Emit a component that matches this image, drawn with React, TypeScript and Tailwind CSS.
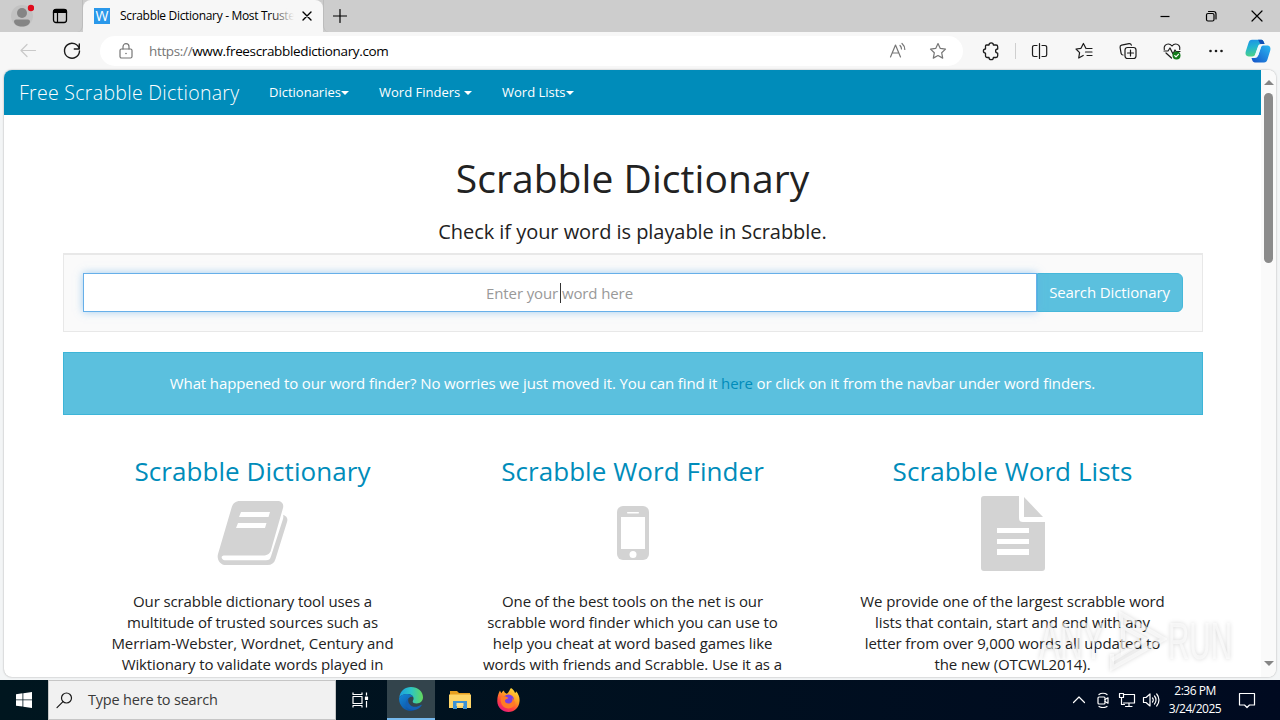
import type { ReactNode } from "react"

function Svg({ size, box, className = "", children }: { size: number; box?: string; className?: string; children: ReactNode }) {
  return (
    <svg
      width={size}
      height={size}
      viewBox={box ?? `0 0 ${size} ${size}`}
      fill="none"
      stroke="currentColor"
      strokeWidth="1.2"
      strokeLinecap="round"
      strokeLinejoin="round"
      className={`shrink-0 ${className}`}
    >
      {children}
    </svg>
  )
}

function TabStrip() {
  return (
    <div className="flex h-8 bg-[#cdcdcd]">
      <div className="flex w-[83px] items-center rounded-br-md border-r border-[#bcbcbc] pl-[10px]">
        <Svg size={24}>
          <circle cx="12" cy="12" r="11" fill="#c2c2c2" stroke="none" />
          <circle cx="12" cy="9" r="5" fill="#858585" stroke="none" />
          <path d="M4 17.500c0-1.500 1.500-2 3-2h10c1.500 0 3 .5 3 2 0 3-4 5-8 5s-8-2-8-5z" fill="#858585" stroke="none" />
          <circle cx="21" cy="4" r="3.200" fill="#e00b1c" stroke="none" />
        </Svg>
        <Svg size={16} className="ml-[18px] text-black">
          <rect x="1.500" y="1.500" width="13" height="13" rx="2.500" strokeWidth="1.300" />
          <path d="M1.500 3.500a2 2 0 0 1 2-2h9a2 2 0 0 1 2 2v1h-13z" fill="currentColor" />
          <path d="M5.500 5v9" />
        </Svg>
      </div>
      <div className="flex w-[240px] items-center rounded-t-lg bg-[#f7f7f7] pl-[11px]">
        <div className="flex h-4 w-4 items-center justify-center bg-[#2a98ea] font-['Open_Sans',sans-serif] text-[14px] leading-none text-white">
          W
        </div>
        <div className="relative ml-[10px] w-[174px] overflow-hidden font-['Open_Sans',sans-serif] text-[12px] tracking-[-0.320px] whitespace-nowrap text-black">
          Scrabble Dictionary - Most Truste
          <div className="absolute inset-y-0 right-0 w-6 bg-gradient-to-r from-transparent to-[#f7f7f7]" />
        </div>
        <Svg size={10} className="ml-2 text-black">
          <path d="M1 1l8 8M9 1L1 9" strokeWidth="1.400" />
        </Svg>
      </div>
      <div className="flex flex-1 items-center rounded-bl-md border-l border-[#bcbcbc] pl-[9px]">
        <Svg size={14} className="text-black">
          <path d="M7 .5v13M.5 7h13" />
        </Svg>
        <div className="ml-auto flex">
          <div className="flex w-[46px] items-center justify-center text-black">
            <Svg size={10}>
              <path d="M.5 5.500h9" strokeLinecap="butt" />
            </Svg>
          </div>
          <div className="flex w-[46px] items-center justify-center text-black">
            <Svg size={12}>
              <rect x="1.500" y="3.500" width="7.500" height="7.500" rx="1.500" />
              <path d="M3.500 1.500H8.500a2.500 2.500 0 0 1 2.500 2.500v5" />
            </Svg>
          </div>
          <div className="flex w-[46px] items-center justify-center text-black">
            <Svg size={12}>
              <path d="M1 1l10 10M11 1L1 11" />
            </Svg>
          </div>
        </div>
      </div>
    </div>
  )
}

function CopilotLogo() {
  return (
    <Svg size={26} box="0 0 24 24">
      <defs>
        <linearGradient id="cpA" x1="0" y1="0" x2="0.2" y2="1">
          <stop offset="0" stopColor="#1b8ee8" />
          <stop offset="0.500" stopColor="#22b5d0" />
          <stop offset="1" stopColor="#4cd08a" />
        </linearGradient>
        <linearGradient id="cpB" x1="1" y1="0" x2="0" y2="1">
          <stop offset="0" stopColor="#2bb8f2" />
          <stop offset="1" stopColor="#1453c8" />
        </linearGradient>
      </defs>
      <path d="M6.500 1.500h8.500c1.700 0 2.300 1.500 3 4h-3c-2 0-2.700 1-3.300 3L9.500 15c-.6 1.500-1.500 2-3 2H3.500C1 17 0 15 .7 12.500l2.500-8C3.900 2.500 4.700 1.500 6.500 1.500z" fill="url(#cpA)" stroke="none" />
      <path d="M17.500 22.500H9c-1.700 0-2.300-1.500-3-4h3c2 0 2.700-1 3.300-3L14.500 9c.6-1.500 1.500-2 3-2h3c2.500 0 3.500 2 2.800 4.500l-2.500 8c-.7 2-1.500 3-3.300 3z" fill="url(#cpB)" stroke="none" />
      <path d="M12.200 8h2.700l-2.500 8H9.200z" fill="#eafaff" stroke="none" />
      <path d="M12 1.500h3c1.700 0 2.300 1.500 3 4h-3c-1.500 0-2-3-3-4z" fill="#124fb5" stroke="none" />
    </Svg>
  )
}

const star = "M10 2.500l2.300 4.900 5.200.7-3.800 3.700 1 5.300-4.700-2.600-4.700 2.600 1-5.300L2.500 8.100l5.200-.7z"

const toolbarIcons = [
  {
    name: "split",
    art: (
      <path d="M7 4.500H4.200A1.700 1.700 0 0 0 2.500 6.200v7.600a1.700 1.700 0 0 0 1.700 1.700H7M9.500 2.500v15M12 4.500h3a1.700 1.700 0 0 1 1.700 1.700v7.600a1.700 1.700 0 0 1-1.700 1.700h-3" />
    ),
  },
  {
    name: "favorites",
    art: (
      <path d="M12 7.500L9.400 2.500 7 7.300l-5 .7 3.600 3.600-.9 5.400 4.500-2.500M13 7.500h5M11.500 11H18M13 14.500h5" />
    ),
  },
  {
    name: "collections",
    art: (
      <>
        <rect x="7" y="6.500" width="11" height="11" rx="2.500" />
        <path d="M12.500 9v6M9.500 12h6M5 14c-1 0-1.600-.6-1.900-1.700L2.100 6.500c-.2-1.200.4-2 1.500-2.300L11 2.600c1.200-.2 2 .3 2.400 1.500" />
      </>
    ),
  },
  {
    name: "essentials",
    art: (
      <>
        <path d="M2.300 8.500C1.500 5 4 3 6.300 3 8 3 9.200 4 10 5c.8-1 2-2 3.700-2 2.300 0 4.800 2 4 5.500M4 12l5.500 5M2 10h4l2-3 3 6 2-4 1 1.500h4" />
        <circle cx="14.500" cy="14.500" r="4" fill="#137b1b" stroke="none" />
        <path d="M12.700 14.600l1.300 1.200 2.400-2.500" stroke="white" />
      </>
    ),
  },
  {
    name: "more",
    art: (
      <g fill="currentColor" stroke="none">
        <circle cx="4.500" cy="10" r="1.300" />
        <circle cx="10" cy="10" r="1.300" />
        <circle cx="15.500" cy="10" r="1.300" />
      </g>
    ),
  },
]

function Toolbar() {
  return (
    <div className="flex h-[38px] items-center bg-[#f7f7f7] text-[#1b1b1b]">
      <Svg size={20} className="ml-[18px] text-[#c9c9c9]">
        <path d="M17.500 9.500H3M9 3.500l-6 6 6 6" />
      </Svg>
      <Svg size={20} className="ml-6">
        <path d="M17.300 8A7.500 7.500 0 1 0 17.500 10M17.300 3v5h-5" strokeWidth="1.400" />
      </Svg>
      <div className="ml-[18px] flex h-[30px] w-[863px] items-center rounded-full bg-white pr-[15px] pl-[18px] text-[#767676]">
        <Svg size={16}>
          <rect x="2" y="6" width="12" height="9" rx="1.500" />
          <path d="M5 6V3.700a3 3 0 0 1 6 0V6" />
          <circle cx="8" cy="10.500" r=".8" fill="currentColor" stroke="none" />
        </Svg>
        <span className="ml-[15px] font-['Open_Sans',sans-serif] text-[13.500px] tracking-[-0.350px]">
          https://<span className="text-black">www.freescrabbledictionary.com</span>
        </span>
        <Svg size={20} className="ml-auto">
          <path d="M2.500 16L7.500 4l5 12M4.300 12h6.400M12 4.500c1 1 1.500 2.300 1.500 3.500M14 2.500c1.700 1.500 2.800 3.500 2.800 6" />
        </Svg>
        <Svg size={20} className="ml-5">
          <path d={star} />
        </Svg>
      </div>
      <div className="flex w-[52px] items-center justify-center pl-1">
        {/* puzzle piece with knobs on top and bottom and two notches */}
        <Svg size={20}>
          <path d="M5.500 4H8a2.200 2.200 0 0 1 4.400 0H15a1.700 1.700 0 0 1 1.700 1.700V8a2.100 2.100 0 0 0 0 4.200v2.600a1.700 1.700 0 0 1-1.700 1.700h-2.600a2.200 2.200 0 0 1-4.400 0H6.200a1.700 1.700 0 0 1-1.700-1.700v-2.600a2.100 2.100 0 0 1 0-4.200V5a1 1 0 0 1 1-1z" strokeWidth="1.300" />
        </Svg>
      </div>
      <div className="h-4 w-px bg-[#cfcfcf]" />
      <div className="ml-[2px] flex">
        {toolbarIcons.map((icon) => (
          <div key={icon.name} className="flex w-11 items-center justify-center">
            <Svg size={20}>{icon.art}</Svg>
          </div>
        ))}
      </div>
      <div className="ml-[7px]">
        <CopilotLogo />
      </div>
    </div>
  )
}

function Caret() {
  return <span className="inline-block h-0 w-0 border-x-4 border-t-4 border-x-transparent border-t-white align-middle" />
}

function Navbar() {
  return (
    <nav className="flex h-[45px] items-center bg-[#008cba] text-[13px] text-white">
      <span className="ml-[15px] w-[235px] text-[19.500px] font-light whitespace-nowrap tracking-[0.300px]">Free Scrabble Dictionary</span>
      <span className="ml-[15px] w-[110px]">
        Dictionaries
        <Caret />
      </span>
      <span className="w-[123px]">
        Word Finders <Caret />
      </span>
      <span>
        Word Lists
        <Caret />
      </span>
    </nav>
  )
}

function BookIcon() {
  return (
    <svg width="72" height="66" viewBox="0 0 72 66" fill="#d3d3d3">
      <path d="M23 1h37c5 0 7 3 6 7L54 50c-1 4-4 5.500-8 5.500H8c-3 0-4 1-3 3 .6 1.400 2 1.800 4 1.800h40c3 0 4-1 5-4L66 19c.5-1.600.4-3 .2-4.300 3.500 1.300 5 3.800 3.800 7.300L58.500 59c-1.200 4-4 6-8 6H9C3 65-.5 59 1 54L14.500 8C16 3 18.500 1 23 1z" />
      <path d="M24 12h29l-1.500 5H22zM21 23h28.500L48 28H19z" fill="white" />
    </svg>
  )
}

function PhoneIcon() {
  return (
    <svg width="32" height="54" viewBox="0 0 32 54" fill="#d3d3d3">
      <rect width="32" height="54" rx="6" />
      <path d="M4 11h24v32H4z" fill="white" />
      <rect x="10" y="6" width="12" height="1.500" rx=".7" fill="white" />
      <circle cx="16" cy="48.500" r="3.500" fill="white" />
    </svg>
  )
}

function FileIcon() {
  return (
    <svg width="64" height="75" viewBox="0 0 64 75" fill="#d3d3d3">
      <path d="M3 0h35v22c0 3 1.500 4 4 4h22v46c0 2-1 3-3 3H3c-2 0-3-1-3-3V3c0-2 1-3 3-3z" />
      <path d="M43 1l19 20H43z" />
      <path d="M16 32h32v5H16zM16 43h32v5H16zM16 53h32v6H16z" fill="white" />
    </svg>
  )
}

const features = [
  {
    title: "Scrabble Dictionary",
    icon: <BookIcon />,
    lines: [
      "Our scrabble dictionary tool uses a",
      "multitude of trusted sources such as",
      "Merriam-Webster, Wordnet, Century and",
      "Wiktionary to validate words played in",
    ],
  },
  {
    title: "Scrabble Word Finder",
    icon: <PhoneIcon />,
    lines: [
      "One of the best tools on the net is our",
      "scrabble word finder which you can use to",
      "help you cheat at word based games like",
      "words with friends and Scrabble. Use it as a",
    ],
  },
  {
    title: "Scrabble Word Lists",
    icon: <FileIcon />,
    lines: [
      "We provide one of the largest scrabble word",
      "lists that contain, start and end with any",
      "letter from over 9,000 words all updated to",
      "the new (OTCWL2014).",
    ],
  },
]

function Page() {
  return (
    <div className="w-[1257px] font-['Open_Sans',sans-serif] text-[15px] text-[#222]">
      <Navbar />
      <main className="mx-auto w-[1140px] text-center tracking-[-0.110px]">
        <h1 className="mt-[36px] text-[39px] leading-[54px] tracking-[0.060px]">Scrabble Dictionary</h1>
        <h4 className="mt-[13px] text-[20px] leading-7 tracking-[-0.050px]">Check if your word is playable in Scrabble.</h4>
        <div className="mt-[7px] flex h-[79px] border border-t-2 border-[#e8e8e8] bg-[#fafafa] px-[19px] pt-[18px]">
          <div className="relative flex h-[39px] w-[954px] items-center justify-center border border-[#66afe9] bg-white pt-px text-[#999] shadow-[0_0_8px_rgba(102,175,233,0.6)]">
            Enter your word here
            <div className="absolute top-[9px] left-[476px] h-5 w-px bg-[#333]" />
          </div>
          <div className="flex h-[39px] flex-1 items-center justify-center rounded-r-md border border-[#46b8da] bg-[#5bc0de] whitespace-nowrap text-white">
            Search Dictionary
          </div>
        </div>
        <div className="mt-5 flex h-[63px] items-center justify-center border border-[#3db5d8] bg-[#5bc0de] text-white">
          <p>
            What happened to our word finder? No worries we just moved it. You can find it{" "}
            <a className="text-[#008cba]">here</a> or click on it from the navbar under word finders.
          </p>
        </div>
        <div className="mt-[37px] grid grid-cols-3">
          {features.map((f) => (
            <section key={f.title}>
              <h3 className="text-[26px] leading-[38px] tracking-[0.060px] text-[#008cba]">{f.title}</h3>
              <div className="flex h-[86px] items-center justify-center">{f.icon}</div>
              <div className="mt-[15px] leading-[21px]">
                {f.lines.map((line) => (
                  <p key={line} className="whitespace-nowrap">{line}</p>
                ))}
              </div>
            </section>
          ))}
        </div>
      </main>
    </div>
  )
}

function Scrollbar() {
  return (
    <div className="flex w-[15px] flex-col items-center bg-[#fafafa]">
      <div className="mt-[10px] border-x-[5px] border-b-[5px] border-x-transparent border-b-[#858585]" />
      <div className="mt-2 h-[170px] w-[9px] rounded-full bg-[#8b8b8b]" />
      <div className="mt-auto mb-[11px] border-x-[5px] border-t-[5px] border-x-transparent border-t-[#858585]" />
    </div>
  )
}

function Watermark() {
  return (
    <div className="absolute top-[610px] left-[1039px] flex h-[62px] w-[194px] items-center font-['Liberation_Sans',sans-serif] text-[51px] leading-none text-white/60 [filter:drop-shadow(0_0_2px_rgba(0,0,0,0.25))]">
      <span className="w-[68px] origin-left scale-x-[0.620]">ANY</span>
      <svg width="60" height="62" viewBox="0 0 60 62" fill="none" stroke="white" strokeOpacity="0.6" strokeWidth="4">
        <path d="M14 17V4l43 25L5 58V44" />
        <path d="M16 21v21l22-13-22-12z" />
        <path d="M5 50l34-20" />
      </svg>
      <span className="ml-[1px] w-[64px] origin-left scale-x-[0.580]">RUN</span>
    </div>
  )
}

function EdgeLogo() {
  return (
    <svg width="24" height="24" viewBox="0 0 24 24">
      <defs>
        <linearGradient id="edgeTop" x1="0" y1="0.500" x2="1" y2="0.500">
          <stop offset="0" stopColor="#1a9fe0" />
          <stop offset="0.500" stopColor="#2cc5c5" />
          <stop offset="1" stopColor="#64d95b" />
        </linearGradient>
        <linearGradient id="edgeLow" x1="0" y1="0" x2="0.800" y2="1">
          <stop offset="0" stopColor="#1389d8" />
          <stop offset="1" stopColor="#0d4c9e" />
        </linearGradient>
      </defs>
      <path d="M.2 10.500C1.200 4 6 0 12 0c7 0 12 4.600 12 10.300 0 3.700-2.700 6.200-6.300 6.200-2.700 0-4-1-4-2 0-.8.900-1.200.9-3C14.600 9 12 7 8.500 7 4 7 1 9 .2 10.500z" fill="url(#edgeTop)" />
      <path d="M.1 10.800C1.500 8 4.800 6.800 8.500 7c2.700.1 5 1.300 5.800 3-3.500-1.200-6 1.600-6 4.800 0 5 5.500 7.300 9.700 6.700C16 23.200 14 24 12 24 5 24-.4 18 .1 10.800z" fill="url(#edgeLow)" />
      <path d="M9.500 11.500c-1.500 5 3 9 8 8.200 2-.3 3.700-1.400 4.600-1.900.5-.2.800.2.500.6-1.500 2.500-4.600 4.600-8.600 4.600-5 0-8-4-7-8 .3-1.500 1.300-2.700 2.500-3.500z" fill="#1461b5" />
    </svg>
  )
}

function ExplorerLogo() {
  return (
    <svg width="22" height="20" viewBox="0 0 22 20">
      <path d="M1 1h7l2 2h11v5H1z" fill="#e8a020" />
      <path d="M0 4.500h22V18H0z" fill="#ffd567" />
      <path d="M4 11h14v8h-4v-3.500H8V19H4z" fill="#3d92d4" />
      <path d="M7.500 13h7v3h-7z" fill="#ffe08a" />
    </svg>
  )
}

function FirefoxLogo() {
  return (
    <svg width="23" height="24" viewBox="0 0 23 24">
      <defs>
        <linearGradient id="foxBody" x1="0.800" y1="0" x2="0.200" y2="1">
          <stop offset="0" stopColor="#ffe13d" />
          <stop offset="0.400" stopColor="#ff9a22" />
          <stop offset="0.700" stopColor="#ff4040" />
          <stop offset="1" stopColor="#e31587" />
        </linearGradient>
      </defs>
      <path d="M14 0c2 1 3.500 3 4 5 .8-.2 1-1 1-1.700C21.500 6 23 9.500 22.500 13.500 22 19.500 17.500 24 11.500 24S.5 19.500.3 13.500C.2 9.500 1 6 3 2.500c.3 1.200.8 2 1.500 2.700C5 4 6 3 7 2.500c0 1.500 1 2.500 2.500 3.200C11.500 5.500 12 2.500 14 0z" fill="url(#foxBody)" />
      <circle cx="11.500" cy="12" r="5.500" fill="#7b3fe0" />
      <path d="M4 9c2.500-1.500 5-1 7.500 1-1.500 1.500-3.500 1-3.500 3 0 2.200 3 3.300 5.500 2 2-1 2.500-3.500 1.500-5 3 1.500 4 6 1 8.800-3 2.700-8 2-10.300-1C3.500 15 3.200 11.500 4 9z" fill="#ff7b25" />
    </svg>
  )
}

function Taskbar() {
  return (
    <div className="flex h-10 items-center bg-gradient-to-r from-[#00161f] to-[#000a20] font-['Open_Sans',sans-serif] text-white">
      <div className="flex w-12 justify-center">
        <svg width="16" height="16" viewBox="0 0 16 16" fill="white">
          <path d="M0 2.200L6.500 1.300v6.200H0zM7.300 1.200L16 0v7.500H7.300zM0 8.300h6.500v6.300L0 13.700zM7.300 8.300H16V16l-8.700-1.200z" />
        </svg>
      </div>
      <div className="flex h-10 w-72 items-center border border-[#c6c6c6] bg-[#f1f1f1] pl-[7px] text-[#3a3a3a]">
        <Svg size={17} className="text-[#1b1b1b]">
          <circle cx="10.500" cy="6" r="5" />
          <path d="M7 9.700L1 15.700" />
        </Svg>
        <span className="ml-[15px] text-[14.500px] tracking-[-0.200px]">Type here to search</span>
      </div>
      <div className="flex w-[51px] justify-center pr-1">
        <Svg size={18}>
          <path d="M2 1.500v2h9v-2M2 16.500v-2h9v2M15.500 1.500v3M15.500 10v6.500" strokeLinecap="butt" />
          <rect x="2" y="5.500" width="9" height="7" />
          <rect x="14.500" y="6" width="2" height="2.500" fill="currentColor" />
        </Svg>
      </div>
      <div className="flex h-10 w-12 items-center justify-center border-b-2 border-[#76b9ed] bg-[#33444c]">
        <EdgeLogo />
      </div>
      <div className="flex w-[49px] justify-center">
        <ExplorerLogo />
      </div>
      <div className="flex w-[49px] justify-center">
        <FirefoxLogo />
      </div>
      <div className="ml-auto flex items-center">
        <Svg size={14}>
          <path d="M1.500 9.500L7 4l5.500 5.500" />
        </Svg>
        <Svg size={16} className="ml-[9px]">
          <rect x="3" y="5" width="7" height="7" rx="1" />
          <path d="M10 7.500l3-1.700v5.400L10 9.500M4 2.500C6 .8 10 .8 12 2.500M4 14.500c2 1.400 6 1.400 8 0" />
        </Svg>
        <Svg size={18} className="ml-[7px]">
          <path d="M5.500 3.500h11v8.500H5.500M11 12v3M7.500 15.500H14M1.500 2.500h4v4h-4zM3.500 6.500v7h3" />
        </Svg>
        <Svg size={18} className="ml-[6px]">
          <path d="M1.500 6.500H4l4-3.500v12L4 11.500H1.500zM10.500 7c1 1 1 3 0 4M12.500 5c2 2.200 2 5.800 0 8M14.700 3c3 3.400 3 8.600 0 12" />
        </Svg>
        <div className="ml-[5px] w-[60px] text-center text-[12px] leading-[18px] whitespace-nowrap tracking-[-0.500px]">
          2:36 PM
          <br />
          3/24/2025
        </div>
        <Svg size={18} className="mr-6 ml-[13px]">
          <path d="M1.500 2.500h15v11.500h-5L9 16.500 6.500 14h-5z" />
        </Svg>
      </div>
    </div>
  )
}

export default function App() {
  return (
    <div className="relative flex h-[720px] w-[1280px] flex-col overflow-hidden bg-[#f3f5f6]">
      <TabStrip />
      <Toolbar />
      <div className="mx-1 mb-[3px] flex h-[607px] overflow-hidden rounded-lg bg-white shadow-[0_0_2px_rgba(0,0,0,0.35)]">
        <Page />
        <Scrollbar />
      </div>
      <Taskbar />
      <Watermark />
    </div>
  )
}
